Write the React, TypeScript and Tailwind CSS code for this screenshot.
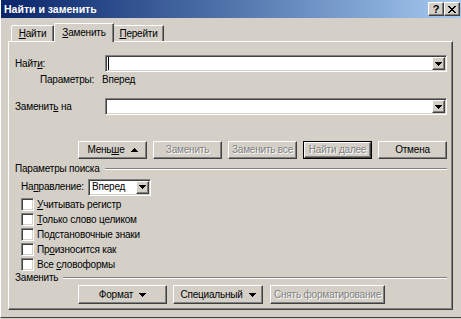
import React from 'react';

const raised =
  'border border-t-white border-l-white border-r-[#404040] border-b-[#404040] shadow-[inset_-1px_-1px_0_#808080] bg-[#d4d0c8]';
const sunken =
  'border border-t-[#808080] border-l-[#808080] border-r-white border-b-white shadow-[inset_1px_1px_0_#404040,inset_-1px_-1px_0_#d4d0c8]';
const disabledText = 'text-[#808080] [text-shadow:1px_1px_0_#ffffff]';

const Tri = ({ up }: { up?: boolean }) => (
  <svg width="7" height="4" viewBox="0 0 7 4" shapeRendering="crispEdges" className="inline-block">
    {up ? (
      <g fill="currentColor">
        <rect x="3" y="0" width="1" height="1" />
        <rect x="2" y="1" width="3" height="1" />
        <rect x="1" y="2" width="5" height="1" />
        <rect x="0" y="3" width="7" height="1" />
      </g>
    ) : (
      <g fill="currentColor">
        <rect x="0" y="0" width="7" height="1" />
        <rect x="1" y="1" width="5" height="1" />
        <rect x="2" y="2" width="3" height="1" />
        <rect x="3" y="3" width="1" height="1" />
      </g>
    )}
  </svg>
);

const DropBtn = () => (
  <div className={`${raised} w-[13px] h-[13px] flex items-center justify-center`}>
    <Tri />
  </div>
);

const Combo = ({ w, text, caret }: { w: string; text?: string; caret?: boolean }) => (
  <div className={`${sunken} ${w} h-[17px] bg-white p-[1px] flex items-center`}>
    {caret && <div className="ml-[1px] w-[1px] h-[13px] bg-black" />}
    {text && <span className="pl-[2px] whitespace-nowrap">{text}</span>}
    <div className="ml-auto">
      <DropBtn />
    </div>
  </div>
);

const Btn = ({
  w,
  h = 'h-[18px]',
  children,
  disabled,
  def,
}: {
  w: string;
  h?: string;
  children: React.ReactNode;
  disabled?: boolean;
  def?: boolean;
}) => {
  const inner = (
    <div
      className={`${raised} w-full h-full flex items-center justify-center gap-[6px] whitespace-nowrap ${disabled ? disabledText : ''}`}
    >
      {children}
    </div>
  );
  if (def) {
    return <div className={`${w} ${h} border border-black`}>{inner}</div>;
  }
  return <div className={`${w} ${h}`}>{inner}</div>;
};

const Check = ({ children }: { children: React.ReactNode }) => (
  <div className="h-[15px] flex items-center pl-[6px]">
    <div className={`${sunken} w-[13px] h-[13px] bg-white`} />
    <span className="ml-[3px] whitespace-nowrap">{children}</span>
  </div>
);

const Group = ({ label, h }: { label: string; h: string }) => (
  <div className={`${h} flex items-center`}>
    <span className="whitespace-nowrap">{label}</span>
    <div className="flex-1 ml-[5px] h-[2px] border-t border-t-[#808080] border-b border-b-white" />
  </div>
);

export default function App() {
  return (
    <div className="w-[461px] h-[319px] overflow-hidden bg-[#d4d0c8] font-['Liberation_Sans',Arial,sans-serif] text-[10px] tracking-[-0.2px] leading-[12px] text-black select-none">
      <div className="h-[318px] border-l border-l-white border-b border-b-[#404040] flex flex-col">
        {/* title bar */}
        <div className="h-[18px] flex items-center bg-linear-to-r from-[#0a246a] to-[#a6caf0] pl-[3px] pr-[1px]">
          <span className="text-white font-bold text-[10.5px] tracking-[0px] leading-[14px]">Найти и заменить</span>
          <div className="ml-auto flex">
            <div className={`${raised} w-[16px] h-[14px] flex items-center justify-center font-bold text-[11px] leading-none`}>
              ?
            </div>
            <div className={`${raised} w-[16px] h-[14px] flex items-center justify-center`}>
              <svg width="8" height="7" viewBox="0 0 8 7" shapeRendering="crispEdges">
                <g fill="#000">
                  <rect x="0" y="0" width="2" height="1" />
                  <rect x="6" y="0" width="2" height="1" />
                  <rect x="1" y="1" width="2" height="1" />
                  <rect x="5" y="1" width="2" height="1" />
                  <rect x="2" y="2" width="4" height="1" />
                  <rect x="3" y="3" width="2" height="1" />
                  <rect x="2" y="4" width="4" height="1" />
                  <rect x="1" y="5" width="2" height="1" />
                  <rect x="5" y="5" width="2" height="1" />
                  <rect x="0" y="6" width="2" height="1" />
                  <rect x="6" y="6" width="2" height="1" />
                </g>
              </svg>
            </div>
          </div>
        </div>

        {/* tabs */}
        <div className="mt-[5px] h-[18px] flex items-end pl-[10px]">
          <div className="w-[43px] h-[16px] border-t border-l border-t-white border-l-white border-r border-r-[#404040] shadow-[inset_-1px_0_0_#808080] rounded-tl-[2px] flex items-center justify-center">
            <span>
              <u>Н</u>айти
            </span>
          </div>
          <div className="relative z-10 w-[60px] h-[19px] -mb-[1px] bg-[#d4d0c8] border-t border-l border-t-white border-l-white border-r border-r-[#404040] shadow-[inset_-1px_0_0_#808080] rounded-tl-[2px] flex items-start justify-center pt-[3px]">
            <span>
              <u>З</u>аменить
            </span>
          </div>
          <div className="w-[50px] h-[16px] border-t border-t-white border-r border-r-[#404040] shadow-[inset_-1px_0_0_#808080] flex items-center justify-center">
            <span>
              <u>П</u>ерейти
            </span>
          </div>
        </div>

        {/* panel */}
        <div className="ml-[7px] w-[445px] h-[269px] border border-t-white border-l-white border-r-[#404040] border-b-[#404040] shadow-[inset_-1px_-1px_0_#808080] pt-[13px] pl-[6px]">
          <div className="w-[432px] flex flex-col">
            <div className="h-[17px] flex items-center">
              <span className="w-[90px]">
                Найт<u>и</u>:
              </span>
              <Combo w="w-[342px]" caret />
            </div>
            <div className="mt-[1px] h-[13px] flex items-center whitespace-nowrap">
              <span className="ml-[25px] w-[62px]">Параметры:</span>
              <span>Вперед</span>
            </div>
            <div className="mt-[12px] h-[17px] flex items-center">
              <span className="w-[90px] whitespace-nowrap">
                Заменит<u>ь</u> на
              </span>
              <Combo w="w-[342px]" />
            </div>

            <div className="mt-[26px] flex justify-end gap-[6px]">
              <Btn w="w-[69px]">
                <span>
                  Мень<u>ш</u>е
                </span>
                <Tri up />
              </Btn>
              <Btn w="w-[69px]" disabled>
                Заменить
              </Btn>
              <Btn w="w-[69px]" disabled>
                Заменить все
              </Btn>
              <Btn w="w-[69px]" disabled def>
                Найти далее
              </Btn>
              <Btn w="w-[69px]">Отмена</Btn>
            </div>

            <div className="mt-[3px]">
              <Group label="Параметры поиска" h="h-[13px]" />
            </div>

            <div className="mt-[4px] h-[16px] flex items-center pl-[6px]">
              <span className="w-[67px] whitespace-nowrap">
                На<u>п</u>равление:
              </span>
              <Combo w="w-[63px]" text="Вперед" />
            </div>

            <div className="mt-[2px] flex flex-col">
              <Check>
                <u>У</u>читывать регистр
              </Check>
              <Check>
                <u>Т</u>олько слово целиком
              </Check>
              <Check>Подстановочные знаки</Check>
              <Check>
                Пр<u>о</u>износится как
              </Check>
              <Check>
                Все <u>с</u>ловоформы
              </Check>
            </div>

            <Group label="Заменить" h="h-[12px]" />

            <div className="mt-[1px] flex pl-[63px]">
              <Btn w="w-[89px]" h="h-[19px]">
                <span>Формат</span>
                <Tri />
              </Btn>
              <div className="ml-[6px]">
                <Btn w="w-[90px]" h="h-[19px]">
                  <span>Специальный</span>
                  <Tri />
                </Btn>
              </div>
              <div className="ml-[7px]">
                <Btn w="w-[115px]" h="h-[19px]" disabled>
                  Снять форматирование
                </Btn>
              </div>
            </div>
          </div>
        </div>
      </div>
    </div>
  );
}
